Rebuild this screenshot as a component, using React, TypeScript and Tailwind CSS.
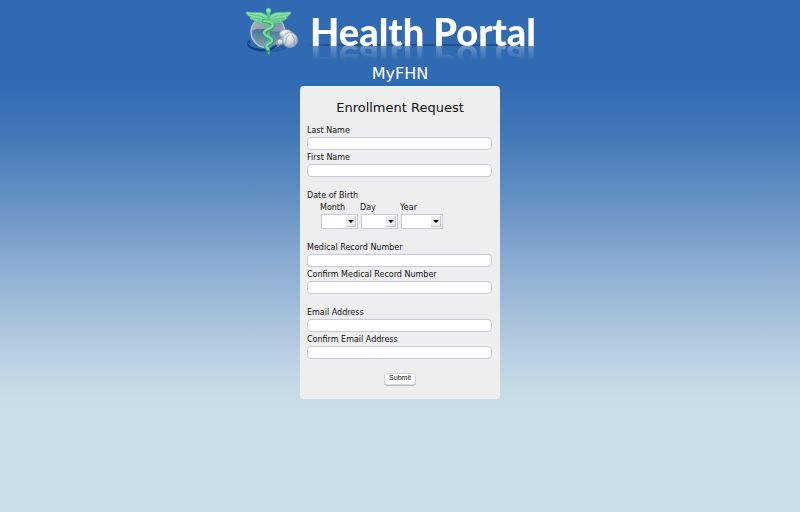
import React from "react";

function Wing() {
  return (
    <g>
      <path
        d="M24 11C21 8 18 6 13 6.500C9 7 6 6 2 6C3 9 4 10 7 11C6 11 6 11.500 6 12C7 14 9 14 11 14.500C10 15 11 16 12 16.500C16 17 19 17 24 20Z"
        fill="url(#wing)"
        stroke="#56bf83"
        strokeWidth="0.7"
      />
      <path d="M5 8C10 10 17 8 23 14M9 12C14 13 18 12 23 16M13 15C17 15 20 15 23 18" stroke="#4fb97c" strokeWidth="0.7" fill="none" />
    </g>
  );
}

function Logo() {
  return (
    <svg viewBox="0 0 56 52" className="h-[52px] w-14 shrink-0" aria-hidden="true">
      <defs>
        <linearGradient id="wing" x1="0" y1="0" x2="0" y2="1">
          <stop offset="0" stopColor="#92e6b0" />
          <stop offset="1" stopColor="#62cb8d" />
        </linearGradient>
        <linearGradient id="glass" x1="0" y1="0" x2="1" y2="1">
          <stop offset="0" stopColor="#a9b7c4" />
          <stop offset="0.5" stopColor="#8496a8" />
          <stop offset="1" stopColor="#b0b9c5" />
        </linearGradient>
        <linearGradient id="liquid" x1="0" y1="0" x2="0" y2="1">
          <stop offset="0" stopColor="#4a7494" />
          <stop offset="1" stopColor="#7c9fb6" />
        </linearGradient>
        <radialGradient id="steel" cx="0.4" cy="0.3" r="0.7">
          <stop offset="0" stopColor="#ffffff" />
          <stop offset="0.6" stopColor="#c9d2dc" />
          <stop offset="1" stopColor="#8f9eaf" />
        </radialGradient>
      </defs>
      <ellipse cx="25" cy="42" rx="17" ry="4" fill="#1d4c8c" opacity="0.4" />
      <path d="M15 12H34Q41 18 41 27Q41 34 34 40Q24 44 15 40Q7 34 7 26Q7 18 15 12Z" fill="url(#glass)" stroke="#bcc5ce" strokeWidth="1.400" />
      <path d="M8 25Q15 21 24 24Q33 27 40 24Q41 33 33 39Q24 43 16 39Q8 33 8 25Z" fill="url(#liquid)" />
      <path d="M6 35C1 40 10 44 20 44C28 44 30 40 35 38" fill="none" stroke="#123f7c" strokeWidth="2.800" />
      <path d="M5 36C3 39 10 42 20 42.500C28 43 30 39 35 37" fill="none" stroke="#3b7ac0" strokeWidth="0.900" />
      <Wing />
      <g transform="translate(49 0) scale(-1 1)">
        <Wing />
      </g>
      <path d="M22.500 5H26.500L25.500 48.500H23.800Z" fill="#58c488" />
      <path
        d="M20 15C31 17 31 21 24 24C18 27 19 29 25 32C30 35 29 37 24 39C21 41 22 42 24 44"
        fill="none"
        stroke="#38a06b"
        strokeWidth="3.800"
        strokeLinecap="round"
      />
      <path
        d="M20 15C31 16 31 20 24 23C18 26 19 28 25 31C30 34 29 36 24 38C21 40 22 41 24 43"
        fill="none"
        stroke="#84dfa7"
        strokeWidth="2.200"
        strokeLinecap="round"
      />
      <circle cx="24.500" cy="4.500" r="2.400" fill="#8be6a8" stroke="#4cb87b" strokeWidth="0.6" />
      <path d="M34 37L41 32" stroke="#a3b1c1" strokeWidth="5" strokeLinecap="round" />
      <circle cx="36" cy="36" r="3" fill="url(#steel)" stroke="#7e91a6" strokeWidth="0.7" />
      <ellipse cx="42" cy="28" rx="6.500" ry="4.500" fill="url(#steel)" stroke="#8495a8" strokeWidth="0.8" />
      <ellipse cx="46" cy="34" rx="7.500" ry="7.500" fill="url(#steel)" stroke="#98a8b8" strokeWidth="0.8" />
      <path d="M45 29Q41 32 42 38M48 29Q52 33 50 38" fill="none" stroke="#93a2b3" strokeWidth="0.900" />
    </svg>
  );
}

function TextField({ id, label, type = "text" }: { id: string; label: string; type?: string }) {
  return (
    <div className="flex flex-col">
      <label htmlFor={id} className="pt-px text-[8px] leading-3">
        {label}
      </label>
      <input
        id={id}
        type={type}
        className="h-[13px] w-full rounded-[4px] border border-[#c9c9d8] bg-white px-1 text-[8px] outline-none"
      />
    </div>
  );
}

function DateSelect({ id, label, options, width }: { id: string; label: string; options: number[]; width: string }) {
  return (
    <div className="flex flex-col">
      <label htmlFor={id} className="pt-px text-[8px] leading-3">
        {label}
      </label>
      <div className={`relative ml-px h-[15px] ${width}`}>
        <select
          id={id}
          defaultValue=""
          className="block h-full w-full appearance-none border border-[#c9c9d8] bg-white pl-1 text-[8px] outline-none"
        >
          <option value=""></option>
          {options.map((n) => (
            <option key={n} value={n}>
              {n}
            </option>
          ))}
        </select>
        <span className="pointer-events-none absolute top-0.5 right-0.5 flex h-[11px] w-[10px] items-center justify-center border-r border-b border-[#c4c4c4] bg-[#eeeeee]">
          <svg viewBox="0 0 6 3" className="h-[3px] w-1.5" aria-hidden="true">
            <path d="M0 0H6L3 3Z" fill="#000000" />
          </svg>
        </span>
      </div>
    </div>
  );
}

const range = (from: number, count: number) => Array.from({ length: count }, (_, i) => from + i);

export default function App() {
  return (
    <div className="min-h-screen bg-[linear-gradient(to_bottom,#306ab2_0px,#306ab2_82px,#457ab9_140px,#6893c4_205px,#90b1d4_275px,#b5cbe1_345px,#c6dae4_386px,#cadee6_415px)] font-['DejaVu_Sans',Verdana,sans-serif] text-[#111111]">
      <header className="flex flex-col items-center pt-1.5">
        <div className="flex w-[312px] max-w-full items-start gap-2.5">
          <Logo />
          <div className="relative pt-[3px]">
            <span className="absolute top-[38px] -right-1 -left-1 h-0.5 bg-[linear-gradient(to_right,transparent,#1f4a85_10%,#1f4a85_90%,transparent)] opacity-80" />
            <h1 className="relative font-['Lato','Open_Sans',sans-serif] text-[38px] leading-[44px] font-black whitespace-nowrap text-white [-webkit-box-reflect:below_-15px_linear-gradient(transparent_50%,rgba(255,255,255,0.45))]">
              Health Portal
            </h1>
          </div>
        </div>
        <p className="mt-1 text-[16px] leading-6 text-white">MyFHN</p>
      </header>
      <main className="mx-auto w-[200px] rounded-[4px] bg-[#eeeeee] px-[7px] pb-3.5">
        <h2 className="pt-3 text-center text-[13px] leading-5">Enrollment Request</h2>
        <form className="flex flex-col pt-1.5" onSubmit={(e) => e.preventDefault()}>
          <div className="flex flex-col gap-px pr-px">
            <TextField id="last-name" label="Last Name" />
            <TextField id="first-name" label="First Name" />
          </div>
          <fieldset className="mt-3">
            <legend className="pt-px text-[8px] leading-[11px]">Date of Birth</legend>
            <div className="flex gap-0.5 pl-[13px]">
              <DateSelect id="month" label="Month" options={range(1, 12)} width="w-[37px]" />
              <DateSelect id="day" label="Day" options={range(1, 31)} width="w-[37px]" />
              <DateSelect id="year" label="Year" options={range(1920, 100)} width="w-[42px]" />
            </div>
          </fieldset>
          <div className="mt-3 flex flex-col gap-px pr-px">
            <TextField id="mrn" label="Medical Record Number" />
            <TextField id="mrn-confirm" label="Confirm Medical Record Number" />
          </div>
          <div className="mt-3 flex flex-col gap-px pr-px">
            <TextField id="email" label="Email Address" type="email" />
            <TextField id="email-confirm" label="Confirm Email Address" type="email" />
          </div>
          <button
            type="submit"
            className="mt-3.5 flex h-3 w-8 items-start justify-center self-center rounded-[3px] border border-[#d4d4d4] bg-white font-['Liberation_Sans',Arial,sans-serif] text-[7px] leading-[7px] shadow-[0_1px_0_#bbbbbb]"
          >
            Submit
          </button>
        </form>
      </main>
    </div>
  );
}
